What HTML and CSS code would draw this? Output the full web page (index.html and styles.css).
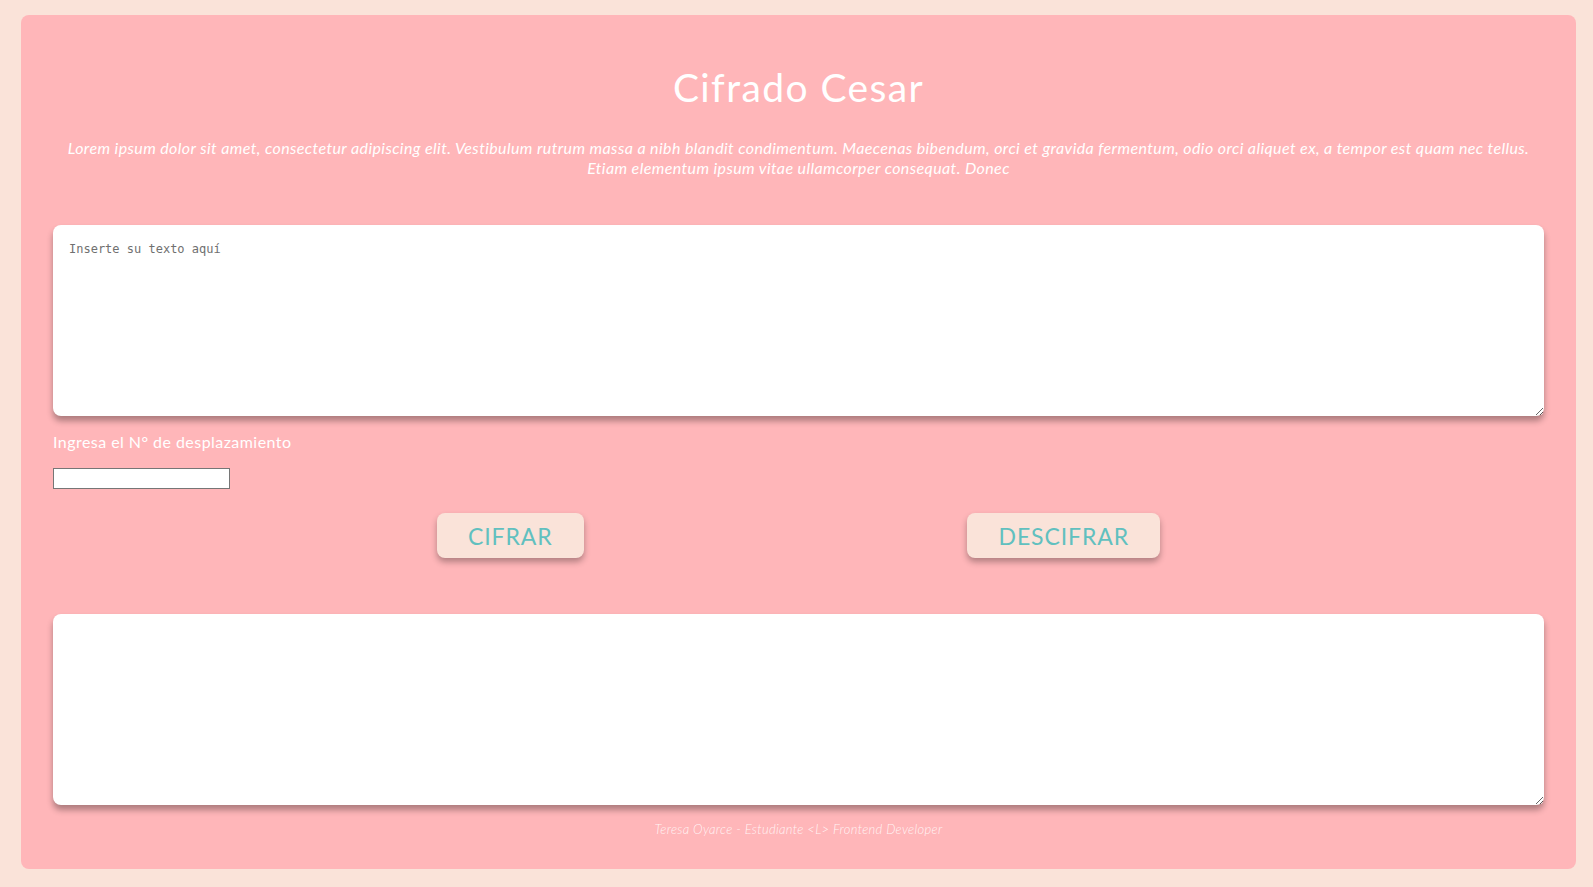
FILE: index.html
```html
<!DOCTYPE html>
<html lang="es">
<head>
<meta charset="utf-8">
<title>Cifrado Cesar</title>
<link rel="stylesheet" href="styles.css">
</head>
<body>
<main class="card">
  <h1 class="title">Cifrado Cesar</h1>
  <p class="intro">Lorem ipsum dolor sit amet, consectetur adipiscing elit. Vestibulum rutrum massa a nibh blandit condimentum. Maecenas bibendum, orci et gravida fermentum, odio orci aliquet ex, a tempor est quam nec tellus. Etiam elementum ipsum vitae ullamcorper consequat. Donec</p>
  <textarea class="box" placeholder="Inserte su texto aquí"></textarea>
  <label class="label" for="offset">Ingresa el N° de desplazamiento</label>
  <input class="offset" id="offset" type="text">
  <div class="actions">
    <button class="btn" type="button">CIFRAR</button>
    <button class="btn" type="button">DESCIFRAR</button>
  </div>
  <textarea class="box box-out"></textarea>
  <footer class="foot">Teresa Oyarce - Estudiante &lt;L&gt; Frontend Developer</footer>
</main>
</body>
</html>
```
FILE: styles.css
```css
html, body {
  margin: 0;
  padding: 0;
}
body {
  background: #fae3d9;
  padding: 15px 17px 18px 21px;
  font-family: "Lato", "Open Sans", sans-serif;
}
.card {
  background: #ffb6b9;
  border-radius: 8px;
  padding: 49px 32px 32px 32px;
  display: flex;
  flex-direction: column;
  box-sizing: border-box;
  height: 854px;
}
.title {
  margin: 0;
  font-size: 39px;
  line-height: 46px;
  font-weight: 400;
  color: #fff;
  text-align: center;
  letter-spacing: 1.4px;
}
.intro {
  margin: 28px 0 0;
  font-size: 16px;
  line-height: 20px;
  font-style: italic;
  font-weight: 400;
  color: #fff;
  text-align: center;
  letter-spacing: 0.39px;
}
.box {
  margin-top: 47px;
  height: 191px;
  box-sizing: border-box;
  width: 100%;
  border: none;
  border-radius: 8px;
  background: #fff;
  padding: 17px 16px;
  box-shadow: 0 5px 6px rgba(0, 0, 0, 0.32);
  font-family: "DejaVu Sans Mono", "Liberation Mono", monospace;
  font-size: 12px;
  color: #333;
  outline: none;
}
.box::placeholder {
  color: #707070;
}
.label {
  margin-top: 16px;
  font-size: 16px;
  line-height: 20px;
  color: #fff;
  font-weight: 400;
  letter-spacing: 0.45px;
}
.offset {
  margin: 16px 0 0;
  width: 177px;
  height: 21px;
  box-sizing: border-box;
  border: 1px solid #767676;
  padding: 0 2px;
  background: #fff;
  outline: none;
}
.actions {
  margin-top: 24px;
  display: flex;
  justify-content: space-evenly;
}
.btn {
  height: 45px;
  padding: 0 31px;
  border: none;
  border-radius: 8px;
  background: #fae3d9;
  color: #61c0bf;
  font-family: "Lato", "Open Sans", sans-serif;
  font-size: 23px;
  font-weight: 400;
  letter-spacing: 0.9px;
  box-shadow: 0 4px 6px rgba(0, 0, 0, 0.3);
  cursor: pointer;
}
.box-out {
  margin-top: 56px;
}
.foot {
  margin-top: 16px;
  font-size: 13px;
  line-height: 16px;
  font-style: italic;
  font-weight: 300;
  color: rgba(255, 255, 255, 0.88);
  text-align: center;
  letter-spacing: 0.3px;
}
```
